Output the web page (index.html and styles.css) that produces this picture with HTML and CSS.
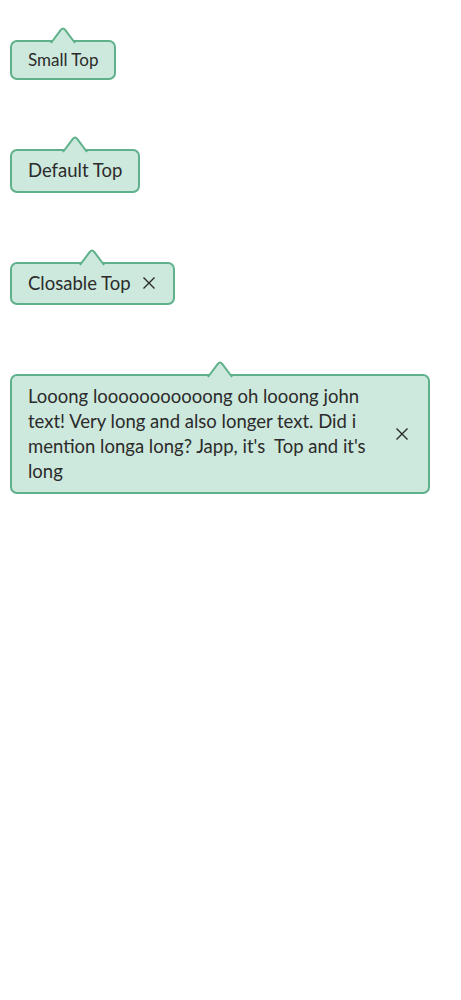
FILE: index.html
```html
<!DOCTYPE html>
<html lang="en">
<head>
<meta charset="utf-8">
<title>Tooltips</title>
<link rel="stylesheet" href="styles.css">
</head>
<body>
<main class="stack">
  <div class="tip tip--small">
    <svg class="tip__arrow" viewBox="0 0 24 16" width="24" height="16" aria-hidden="true"><path d="M0 16 L9.8 2.8 Q12 0 14.2 2.8 L24 16"/></svg>
    <span class="tip__text">Small Top</span>
  </div>
  <div class="tip">
    <svg class="tip__arrow" viewBox="0 0 24 16" width="24" height="16" aria-hidden="true"><path d="M0 16 L9.8 2.8 Q12 0 14.2 2.8 L24 16"/></svg>
    <span class="tip__text">Default Top</span>
  </div>
  <div class="tip">
    <svg class="tip__arrow" viewBox="0 0 24 16" width="24" height="16" aria-hidden="true"><path d="M0 16 L9.8 2.8 Q12 0 14.2 2.8 L24 16"/></svg>
    <span class="tip__text">Closable Top</span>
    <button class="tip__close" type="button" aria-label="Close"><svg viewBox="0 0 16 16" width="16" height="16"><path d="M2.5 2.5 L13.5 13.5 M13.5 2.5 L2.5 13.5"/></svg></button>
  </div>
  <div class="tip tip--long">
    <svg class="tip__arrow" viewBox="0 0 24 16" width="24" height="16" aria-hidden="true"><path d="M0 16 L9.8 2.8 Q12 0 14.2 2.8 L24 16"/></svg>
    <span class="tip__text">Looong looooooooooong oh looong john text! Very long and also longer text. Did i mention longa long? Japp, it's &nbsp;Top and it's long</span>
    <button class="tip__close" type="button" aria-label="Close"><svg viewBox="0 0 16 16" width="16" height="16"><path d="M2.5 2.5 L13.5 13.5 M13.5 2.5 L2.5 13.5"/></svg></button>
  </div>
</main>
</body>
</html>
```

FILE: styles.css
```css
html, body {
  margin: 0;
  padding: 0;
  background: #ffffff;
}

body {
  font-family: Lato, "Open Sans", sans-serif;
  color: #2b2b2b;
}

.stack {
  display: flex;
  flex-direction: column;
  align-items: flex-start;
  gap: 69px;
  padding: 40px 10px;
}

.tip {
  position: relative;
  display: flex;
  align-items: center;
  max-width: 420px;
  box-sizing: border-box;
  padding: 8px 16px;
  background: #cde8dc;
  border: 2px solid #5fb18b;
  border-radius: 7px;
  font-size: 18.5px;
  line-height: 23.5px;
}

.tip--small {
  font-size: 17px;
  line-height: 20px;
}

.tip--long {
  width: 420px;
  line-height: 25px;
}

.tip__arrow {
  position: absolute;
  top: -15px;
  left: 50%;
  transform: translateX(-50%);
  overflow: visible;
}

.tip__arrow path {
  fill: #cde8dc;
  stroke: #5fb18b;
  stroke-width: 2;
  stroke-linejoin: round;
}

.tip__text {
  flex: 1 1 auto;
}

.tip__close {
  flex: 0 0 auto;
  display: flex;
  align-items: center;
  justify-content: center;
  width: 16px;
  height: 16px;
  margin-left: 10px;
  padding: 0;
  border: 0;
  background: none;
}

.tip--long .tip__close {
  margin-left: 14px;
  margin-right: 2px;
}

.tip__close path {
  fill: none;
  stroke: #2b2b2b;
  stroke-width: 1.4;
}
```
